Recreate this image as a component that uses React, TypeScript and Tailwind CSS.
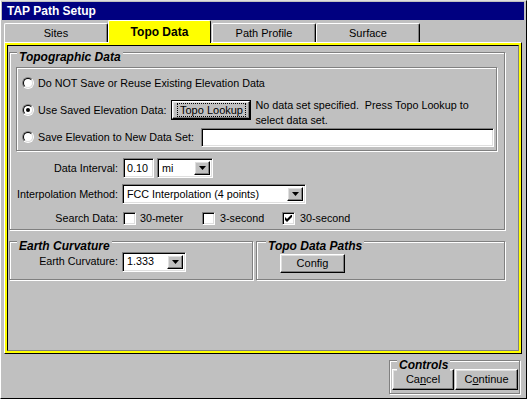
import React from "react";

// Win95 bevels
const raised =
  "border border-t-white border-l-white border-r-black border-b-black shadow-[inset_-1px_-1px_0_#808080,inset_1px_1px_0_#dfdfdf]";
const sunken =
  "border border-t-[#808080] border-l-[#808080] border-r-white border-b-white shadow-[inset_1px_1px_0_#000,inset_-1px_-1px_0_#dfdfdf]";
const etched = "border border-[#808080] shadow-[inset_1px_1px_0_#fff,1px_1px_0_#fff]";

interface GroupBoxProps {
  title?: string;
  legendLeft?: string;
  className?: string;
  children?: React.ReactNode;
}

const GroupBox: React.FC<GroupBoxProps> = ({ title, legendLeft = "left-[7px]", className = "", children }) => (
  <div className={`relative ${etched} ${className}`}>
    {title && (
      <span
        className={`absolute top-[-3px] ${legendLeft} px-[2px] bg-[#c0c0c0] text-[12px] leading-[14px] font-bold italic whitespace-nowrap`}
      >
        {title}
      </span>
    )}
    {children}
  </div>
);

const Radio: React.FC<{ checked?: boolean }> = ({ checked }) => (
  <span className="w-[12px] h-[12px] shrink-0 rounded-full border border-t-[#808080] border-l-[#808080] border-r-white border-b-white flex items-center justify-center">
    <span className="w-[10px] h-[10px] rounded-full border border-t-black border-l-black border-r-[#dfdfdf] border-b-[#dfdfdf] bg-white flex items-center justify-center">
      {checked && <span className="w-[4px] h-[4px] rounded-full bg-black" />}
    </span>
  </span>
);

const Check: React.FC<{ checked?: boolean }> = ({ checked }) => (
  <span className={`w-[13px] h-[13px] shrink-0 bg-white ${sunken} flex items-center justify-center`}>
    {checked && (
      <svg width="7" height="7" viewBox="0 0 7 7">
        <polygon points="0,2 2,4 7,-1 7,2 2,7 0,5" fill="#000" />
      </svg>
    )}
  </span>
);

const Arrow: React.FC = () => (
  <span className={`w-[16px] shrink-0 bg-[#c0c0c0] ${raised} flex items-center justify-center`}>
    <svg width="7" height="4" viewBox="0 0 7 4">
      <path d="M0 0h7L3.5 4z" fill="#000" />
    </svg>
  </span>
);

const Select: React.FC<{ value: string; className?: string }> = ({ value, className = "" }) => (
  <div className={`${sunken} bg-white flex items-stretch p-[2px] ${className}`}>
    <span className="flex-1 pl-[2px] flex items-center whitespace-nowrap overflow-hidden">{value}</span>
    <Arrow />
  </div>
);

const Button: React.FC<{ className?: string; children: React.ReactNode }> = ({ className = "", children }) => (
  <button className={`${raised} bg-[#c0c0c0] flex items-center justify-center text-[11px] ${className}`}>
    {children}
  </button>
);

const tabs = ["Sites", "Topo Data", "Path Profile", "Surface"];

export default function App() {
  return (
    <div className="w-[527px] h-[399px] bg-[#c0c0c0] border border-t-[#dfdfdf] border-l-white border-r-black border-b-black flex flex-col text-black text-[10.75px] font-['Liberation_Sans',Arial,sans-serif] overflow-hidden whitespace-nowrap">
      {/* title bar */}
      <div className="ml-[1px] mr-[2px] mt-[1px] h-[18px] bg-[#000080] text-white font-bold text-[12px] pl-[5px] flex items-center">
        TAP Path Setup
      </div>

      {/* tabs */}
      <div className="ml-[3px] mt-[1px] h-[21px] flex items-end text-[11px]">
        {tabs.map((t) =>
          t === "Topo Data" ? (
            <div
              key={t}
              className="relative z-10 mb-[-1px] w-[103px] h-[23px] bg-[#ffff00] border-t border-l border-r border-t-white border-l-white border-r-black rounded-t-[2px] flex items-center justify-center font-bold text-[12px]"
            >
              {t}
            </div>
          ) : (
            <div
              key={t}
              className={`w-[104px] h-[19px] border-t border-l border-r border-t-white border-l-white border-r-black rounded-t-[2px] shadow-[inset_-1px_0_0_#808080] flex items-center justify-center ${t === "Path Profile" ? "ml-[1px]" : ""}`}
            >
              {t}
            </div>
          )
        )}
      </div>

      {/* tab panel */}
      <div className="ml-[3px] w-[518px] h-[312px] border border-t-white border-l-white border-r-black border-b-black">
        <div className="h-full border-2 border-[#ffff00]">
          <div className="h-full border border-t-black border-l-black border-r-[#808080] border-b-[#808080] pl-[1px] pt-[6px]">
            <GroupBox title="Topographic Data" className="w-[496px] h-[178px]">
              {/* radio group */}
              <div className={`ml-[6px] mt-[14px] w-[481px] h-[84px] ${etched} pl-[5px] pr-[2px] pt-[7px] flex flex-col`}>
                <div className="h-[16px] flex items-center gap-[4px]">
                  <Radio />
                  <span>Do NOT Save or Reuse Existing Elevation Data</span>
                </div>
                <div className="mt-[6px] flex items-start">
                  <div className="mt-[3px] h-[20px] flex items-center gap-[4px]">
                    <Radio checked />
                    <span>Use Saved Elevation Data:</span>
                    <span className="ml-[1px] w-[80px] h-[20px] border border-black">
                      <Button className="w-full h-full">
                        <span className="border border-dotted border-black px-[2px] leading-[12px]">Topo Lookup</span>
                      </Button>
                    </span>
                  </div>
                  <div className="ml-[4px] mt-[1px] leading-[15px]">
                    No data set specified.&nbsp; Press Topo Lookup to
                    <br />
                    select data set.
                  </div>
                </div>
                <div className="h-[18px] flex items-center gap-[4px]">
                  <Radio />
                  <span>Save Elevation to New Data Set:</span>
                  <span className={`ml-auto w-[293px] h-[19px] bg-white ${sunken}`} />
                </div>
              </div>

              {/* fields */}
              <div className="mt-[7px] h-[20px] flex items-center">
                <span className="w-[108px] text-right">Data Interval:</span>
                <span className={`ml-[5px] w-[31px] h-[20px] bg-white ${sunken} pl-[3px] flex items-center`}>0.10</span>
                <Select value="mi" className="ml-[3px] w-[56px] h-[20px]" />
              </div>
              <div className="mt-[6px] h-[20px] flex items-center">
                <span className="w-[108px] text-right">Interpolation Method:</span>
                <Select value="FCC Interpolation (4 points)" className="ml-[4px] w-[184px] h-[20px]" />
              </div>
              <div className="mt-[7px] h-[14px] flex items-center">
                <span className="w-[108px] text-right">Search Data:</span>
                <div className="ml-[5px] w-[79px] flex items-center gap-[4px]">
                  <Check />
                  <span>30-meter</span>
                </div>
                <div className="w-[80px] flex items-center gap-[5px]">
                  <Check />
                  <span>3-second</span>
                </div>
                <div className="flex items-center gap-[5px]">
                  <Check checked />
                  <span>30-second</span>
                </div>
              </div>
            </GroupBox>

            <div className="mt-[11px] flex gap-[3px]">
              <GroupBox title="Earth Curvature" className="w-[244px] h-[39px] flex items-center">
                <span className="w-[108px] text-right mt-[2px]">Earth Curvature:</span>
                <Select value="1.333" className="ml-[4px] w-[64px] h-[20px] mt-[2px]" />
              </GroupBox>
              <GroupBox title="Topo Data Paths" legendLeft="left-[9px]" className="w-[249px] h-[39px]">
                <Button className="ml-[23px] mt-[12px] w-[65px] h-[19px]">Config</Button>
              </GroupBox>
            </div>
          </div>
        </div>
      </div>

      {/* bottom controls */}
      <div className="mt-[6px] mr-[6px] flex justify-end">
        <GroupBox title="Controls" className="w-[131px] h-[34px] flex items-start">
          <div className="ml-[2px] mt-[8px] flex gap-[1px]">
            <Button className="w-[62px] h-[21px]">
              Ca<span className="underline">n</span>cel
            </Button>
            <Button className="w-[63px] h-[21px]">
              C<span className="underline">o</span>ntinue
            </Button>
          </div>
        </GroupBox>
      </div>
    </div>
  );
}
